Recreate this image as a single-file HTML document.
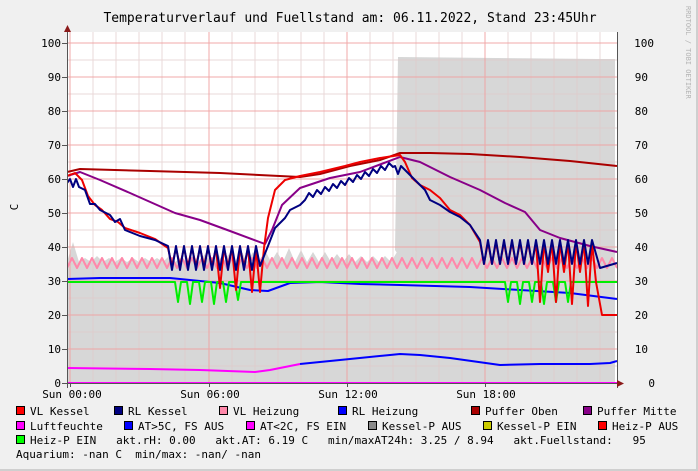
<!DOCTYPE html>
<html><head><meta charset="utf-8"><style>
html,body{margin:0;padding:0;background:#f0f0f0;}
svg{display:block;}
text{font-family:"DejaVu Sans Mono","Liberation Mono",monospace;fill:#000;white-space:pre;}
</style></head><body>
<svg width="698" height="471" xmlns="http://www.w3.org/2000/svg">
<defs><clipPath id="pc"><rect x="67" y="25" width="551" height="360"/></clipPath></defs>
<rect x="0" y="0" width="698" height="471" fill="#f0f0f0"/>
<rect x="696" y="0" width="2" height="471" fill="#cfcfcf"/>
<rect x="0" y="469" width="698" height="2" fill="#cfcfcf"/>
<rect x="67" y="32" width="550" height="351" fill="#fff"/>
<path d="M67,383 L67,262 l6,-20 l6,20 l6,-4 l6,4 l6,-6 l6,6 l6,-4 l6,4 l6,-4 l6,4 l6,-4 l6,4 l6,-4 l6,4 l6,-4 l6,4 l6,-6 l6,6 l6,-4 l6,4 l6,-6 l6,6 l6,-8 l6,8 l6,-10 l6,10 l6,-8 l6,8 l6,-12 l6,12 l6,-10 l6,10 l6,-12 l6,12 l6,-10 l6,10 l6,-14 l6,14 l6,-12 l6,12 l6,-10 l6,10 l6,-10 l6,10 l6,-8 l6,8 l6,-8 l6,8 l6,-6 l6,6 l6,-6 l6,6 l6,-6 l6,6 l6,-10 l6,10 L395,250 L398,57 L600,59 L615,59 L615,383 Z" fill="#d7d7d7"/>
<g stroke="#e2c8c8" stroke-width="1" opacity="0.7">
<path d="M93,32V383M116,32V383M139,32V383M162,32V383M185,32V383M232,32V383M255,32V383M278,32V383M301,32V383M324,32V383M370,32V383M393,32V383M416,32V383M439,32V383M462,32V383M508,32V383M531,32V383M554,32V383M577,32V383M600,32V383"/>
<path d="M67,366H617M67,332H617M67,298H617M67,264H617M67,230H617M67,196H617M67,162H617M67,128H617M67,94H617M67,60H617"/>
</g>
<g stroke="#f0a0a0" stroke-width="1" opacity="0.9">
<path d="M70,32V383M209,32V383M347,32V383M485,32V383"/>
<path d="M67,349H617M67,315H617M67,281H617M67,247H617M67,213H617M67,179H617M67,145H617M67,111H617M67,77H617M67,43H617"/>
</g>
<g fill="none" stroke-width="2" stroke-linejoin="round" clip-path="url(#pc)">
<path d="M67,368 L150,369 L200,370 L255,372 L270,370 L300,364" stroke="#ff00ff"/>
<path d="M300,364 L340,360 L390,355 L400,354 L420,355 L450,358 L500,365 L540,364 L590,364 L610,363 L617,361" stroke="#0000ff"/>
<path d="M67,383 H617" stroke="#ff00ff"/>
<path d="M67,279 L100,278 L170,278 L220,283 L250,290 L268,291 L290,283 L320,282 L360,284 L400,285 L470,287 L520,290 L570,293 L617,299" stroke="#0000ff"/>
<path d="M67,282 H175 l3,20 l3,-20 l6,0 l3,22 l3,-22 l6,0 l3,20 l3,-20 l6,0 l3,22 l3,-22 l6,0 l3,20 l3,-20 l6,0 l3,18 l3,-18 H505 l3,20 l3,-20 l6,0 l3,22 l3,-22 l6,0 l3,20 l3,-20 l6,0 l3,22 l3,-22 l6,0 l3,20 l3,-20 l6,0 l3,20 l3,-20 H617" stroke="#00ee00"/>
<path d="M67,268 l5,-10 l5,10 l5,-10 l5,10 l5,-10 l5,10 l5,-10 l5,10 l5,-10 l5,10 l5,-10 l5,10 l5,-10 l5,10 l5,-10 l5,10 l5,-10 l5,10 l5,-10 l5,10 l5,-10 l5,10 l5,-10 l5,10 l5,-10 l5,10 l5,-10 l5,10 l5,-10 l5,10 l5,-10 l5,10 l5,-10 l5,10 l5,-10 l5,10 l5,-10 l5,10 l5,-10 l5,10 l5,-10 l5,10 l5,-10 l5,10 l5,-10 l5,10 l5,-10 l5,10 l5,-10 l5,10 l5,-10 l5,10 l5,-10 l5,10 l5,-10 l5,10 l5,-10 l5,10 l5,-10 l5,10 l5,-10 l5,10 l5,-10 l5,10 l5,-10 l5,10 l5,-10 l5,10 l5,-10 l5,10 l5,-10 l5,10 l5,-10 l5,10 l5,-10 l5,10 l5,-10 l5,10 l5,-10 l5,10 l5,-10 l5,10 l5,-10 l5,10 l5,-10 l5,10 l5,-10 l5,10 l5,-10 l5,10 l5,-10 l5,10 l5,-10 l5,10 l5,-10 l5,10 l5,-10 l5,10 l5,-10 l5,10 l5,-10 l5,10 l5,-10 l5,10 l5,-10 l5,10 l5,-10 l5,10 l5,-10 l5,10" stroke="#ff88aa"/>
<path d="M67,176 L80,172 L100,180 L130,193 L175,213 L200,220 L230,231 L265,244 L272,230 L282,205 L300,188 L330,178 L360,172 L400,157 L420,162 L450,177 L480,190 L505,203 L525,212 L540,230 L560,238 L590,246 L617,252" stroke="#880088"/>
<path d="M67,172 L80,169 L150,171 L220,173 L300,177 L320,174 L350,166 L380,160 L400,153 L430,153 L470,154 L520,157 L570,161 L617,166" stroke="#aa0000"/>
<path d="M67,176 L75,173 L82,180 L88,196 L95,205 L102,210 L110,219 L118,222 L125,228 L140,233 L155,239 L168,248 l4,18 l4,-18 l4,18 l4,-18 l4,18 l4,-18 l4,18 l4,-18 l4,18 l4,-18 l4,18 l4,-18 l4,40 l4,-40 l4,18 l4,-18 l4,42 l4,-42 l4,18 l4,-18 l4,44 l4,-44 l4,44 l4,-44 L268,218 L275,190 L285,180 L300,176 L320,172 L345,166 L360,162 L380,158 L400,155 L405,162 L412,178 L420,185 L430,190 L440,198 L450,210 L460,215 L470,225 L480,242 l4,22 l4,-22 l4,22 l4,-22 l4,22 l4,-22 l4,22 l4,-22 l4,22 l4,-22 l4,22 l4,-22 l4,22 l4,-22 l4,60 l4,-60 l4,30 l4,-30 l4,60 l4,-60 l4,30 l4,-30 l4,62 l4,-62 l4,30 l4,-30 l4,64 l4,-64 l4,40 L602,315 L617,315" stroke="#ee0000"/>
<path d="M67,183 l3,-4 l3,8 l3,-8 l3,8 L85,190 L90,204 L95,204 L100,210 L110,215 L115,222 L120,219 L125,230 L140,236 L155,240 L168,246 l4,24 l4,-24 l4,24 l4,-24 l4,24 l4,-24 l4,24 l4,-24 l4,24 l4,-24 l4,24 l4,-24 l4,24 l4,-24 l4,24 l4,-24 l4,24 l4,-24 l4,24 l4,-24 l4,24 l4,-24 l4,20 L268,246 L275,228 L285,218 L290,210 L300,205 L305,200 l4,-7 l4,4 l4,-7 l4,4 l4,-7 l4,4 l4,-7 l4,4 l4,-7 l4,4 l4,-7 l4,4 l4,-7 l4,4 l4,-7 l4,4 l4,-7 l4,4 l4,-7 l4,4 l4,-7 l4,4 L395,166 l3,8 l3,-8 L405,170 L415,180 L425,190 L430,200 L440,205 L450,212 L460,217 L470,225 L480,240 l4,24 l4,-24 l4,24 l4,-24 l4,24 l4,-24 l4,24 l4,-24 l4,24 l4,-24 l4,24 l4,-24 l4,24 l4,-24 l4,24 l4,-24 l4,24 l4,-24 l4,24 l4,-24 l4,24 l4,-24 l4,24 l4,-24 l4,24 l4,-24 l4,24 l4,-24 L600,268 L617,263" stroke="#000080"/>
</g>
<g stroke="#555" stroke-width="1">
<path d="M67.5,30V388M62,383.5H622"/>
<path d="M62,43.5h5M62,77.5h5M62,111.5h5M62,145.5h5M62,179.5h5M62,213.5h5M62,247.5h5M62,281.5h5M62,315.5h5M62,349.5h5"/>
<path d="M70.5,383v4M209.5,383v4M347.5,383v4M485.5,383v4"/>
<path d="M617.5,32V388"/>
</g>
<path d="M64,32 L67.5,25 L71,32Z" fill="#8b1a1a"/>
<path d="M617,380 L624,383.5 L617,387Z" fill="#8b1a1a"/>
<text x="350" y="22" font-size="13" text-anchor="middle">Temperaturverlauf und Fuellstand am: 06.11.2022, Stand 23:45Uhr</text>
<text x="686" y="6" font-size="7" style="fill:#b4b4b4" transform="rotate(90 686 6)">RRDTOOL / TOBI OETIKER</text>
<text x="18" y="207" font-size="11" text-anchor="middle" transform="rotate(-90 18 207)">C</text>
<g font-size="11" text-anchor="end">
<text x="61" y="47">100</text><text x="61" y="81">90</text><text x="61" y="115">80</text><text x="61" y="149">70</text><text x="61" y="183">60</text><text x="61" y="217">50</text><text x="61" y="251">40</text><text x="61" y="285">30</text><text x="61" y="319">20</text><text x="61" y="353">10</text><text x="61" y="387">0</text>
</g>
<g font-size="11" text-anchor="end">
<text x="654" y="47">100</text><text x="648" y="81">90</text><text x="648" y="115">80</text><text x="648" y="149">70</text><text x="648" y="183">60</text><text x="648" y="217">50</text><text x="648" y="251">40</text><text x="648" y="285">30</text><text x="648" y="319">20</text><text x="648" y="353">10</text><text x="655" y="387">0</text>
</g>
<g font-size="11" text-anchor="middle">
<text x="72" y="398">Sun 00:00</text><text x="210" y="398">Sun 06:00</text><text x="348" y="398">Sun 12:00</text><text x="486" y="398">Sun 18:00</text>
</g>
<g stroke="#000" stroke-width="1">
<rect x="16.5" y="406.5" width="8" height="8" fill="#ff0000"/>
<rect x="114.5" y="406.5" width="8" height="8" fill="#000080"/>
<rect x="219.5" y="406.5" width="8" height="8" fill="#ff88aa"/>
<rect x="338.5" y="406.5" width="8" height="8" fill="#0000ff"/>
<rect x="471.5" y="406.5" width="8" height="8" fill="#aa0000"/>
<rect x="583.5" y="406.5" width="8" height="8" fill="#880088"/>
<rect x="16.5" y="421.5" width="8" height="8" fill="#ff00ff"/>
<rect x="124.5" y="421.5" width="8" height="8" fill="#0000ff"/>
<rect x="246.5" y="421.5" width="8" height="8" fill="#ff00ff"/>
<rect x="368.5" y="421.5" width="8" height="8" fill="#888888"/>
<rect x="483.5" y="421.5" width="8" height="8" fill="#cccc00"/>
<rect x="598.5" y="421.5" width="8" height="8" fill="#ff0000"/>
<rect x="16.5" y="435.5" width="8" height="8" fill="#00ff00"/>
</g>
<g font-size="11">
<text x="30" y="415">VL Kessel</text>
<text x="128" y="415">RL Kessel</text>
<text x="233" y="415">VL Heizung</text>
<text x="352" y="415">RL Heizung</text>
<text x="485" y="415">Puffer Oben</text>
<text x="597" y="415">Puffer Mitte</text>
<text x="30" y="430">Luftfeuchte</text>
<text x="138" y="430">AT&gt;5C, FS AUS</text>
<text x="260" y="430">AT&lt;2C, FS EIN</text>
<text x="382" y="430">Kessel-P AUS</text>
<text x="497" y="430">Kessel-P EIN</text>
<text x="612" y="430">Heiz-P AUS</text>
<text x="30" y="444">Heiz-P EIN   akt.rH: 0.00   akt.AT: 6.19 C   min/maxAT24h: 3.25 / 8.94   akt.Fuellstand:   95</text>
<text x="16" y="458">Aquarium: -nan C  min/max: -nan/ -nan</text>
</g>
</svg>
</body></html>
